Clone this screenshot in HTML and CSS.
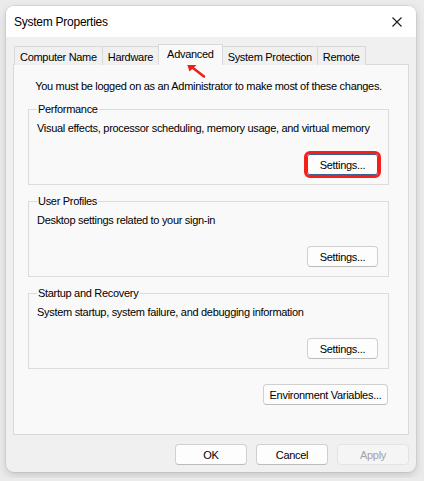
FILE: index.html
```html
<!DOCTYPE html>
<html>
  <head>
    <meta charset="UTF-8">
    <title>System Properties</title>
    <link rel="stylesheet" href="styles.css">
  </head>
  <body>
    <div class="window">
      <div class="titlebar">
        <span class="title">System Properties</span>
        <svg class="close" width="10" height="10" viewBox="0 0 10 10">
          <path d="M0.5 0.5 L9.5 9.5 M9.5 0.5 L0.5 9.5" stroke="#1a1a1a" stroke-width="1.1" fill="none"/>
        </svg>
      </div>
      <div class="content">
        <div class="tabs">
          <div class="tab">Computer Name</div>
          <div class="tab">Hardware</div>
          <div class="tab active">Advanced</div>
          <div class="tab">System Protection</div>
          <div class="tab">Remote</div>
        </div>
        <div class="panel">
          <p class="notice">You must be logged on as an Administrator to make most of these changes.</p>
          <fieldset class="group">
            <legend>Performance</legend>
            <p class="desc">Visual effects, processor scheduling, memory usage, and virtual memory</p>
            <div class="actions">
              <button type="button" class="btn marked">Settings...</button>
            </div>
          </fieldset>
          <fieldset class="group">
            <legend>User Profiles</legend>
            <p class="desc">Desktop settings related to your sign-in</p>
            <div class="actions">
              <button type="button" class="btn">Settings...</button>
            </div>
          </fieldset>
          <fieldset class="group">
            <legend>Startup and Recovery</legend>
            <p class="desc">System startup, system failure, and debugging information</p>
            <div class="actions">
              <button type="button" class="btn">Settings...</button>
            </div>
          </fieldset>
          <div class="env-row">
            <button type="button" class="btn wide">Environment Variables...</button>
          </div>
        </div>
        <div class="footer">
          <button type="button" class="btn dialog">OK</button>
          <button type="button" class="btn dialog">Cancel</button>
          <button type="button" class="btn dialog" disabled>Apply</button>
        </div>
      </div>
      <svg class="arrow" width="20" height="16" viewBox="0 0 20 16">
        <path d="M7 5 L18 13.5" stroke="#e8231c" stroke-width="2.6" stroke-linecap="round"/>
        <path d="M1 1 L10.5 2 L3.5 8.5 Z" fill="#e8231c"/>
      </svg>
    </div>
  </body>
</html>
```

FILE: styles.css
```css
* {
  box-sizing: border-box;
}
body {
  margin: 0;
  padding: 6px;
  background-color: #ebebeb;
  font-family: "Liberation Sans", Arial, sans-serif;
  font-size: 11px;
  letter-spacing: -0.3px;
  color: #000;
}
p {
  margin: 0;
}
.window {
  position: relative;
  width: 410px;
  height: 466px;
  border-radius: 8px;
  background-color: #f0f0f0;
  box-shadow: 0 0 0 1px rgba(0, 0, 0, 0.06), 0 3px 8px rgba(0, 0, 0, 0.16);
  overflow: hidden;
}
.titlebar {
  display: flex;
  align-items: center;
  justify-content: space-between;
  height: 31px;
  padding: 0 14px 0 8px;
  background-color: #fff;
}
.title {
  font-size: 12px;
  letter-spacing: -0.25px;
  padding-top: 1px;
}
.close {
  display: block;
  margin-top: 1px;
}
.content {
  padding: 7px 7px 0 7px;
}
.tabs {
  display: flex;
  align-items: flex-end;
  height: 21px;
  margin-bottom: -1px;
  padding-left: 1px;
}
.tab {
  height: 19px;
  padding: 3px 5px 0 5px;
  border: 1px solid #d9d9d9;
  border-bottom: none;
  margin-right: -1px;
  background-color: #f0f0f0;
  line-height: 15px;
}
.tab.active {
  position: relative;
  z-index: 1;
  height: 21px;
  padding: 2px 8px 0 8px;
  background-color: #f9f9f9;
}
.panel {
  height: 371px;
  padding: 14px 19px 0 14px;
  border: 1px solid #d9d9d9;
  background-color: #f9f9f9;
  line-height: 15px;
}
.notice {
  margin-bottom: 8px;
  text-align: center;
  white-space: nowrap;
}
.group {
  margin: 0 0 9px 0;
  padding: 0 10px 9px 8px;
  border: 1px solid #dcdcdc;
  min-width: 0;
}
.group legend {
  padding: 0 1px;
  line-height: 15px;
}
.desc {
  margin-top: 4px;
  white-space: nowrap;
}
.actions {
  display: flex;
  justify-content: flex-end;
  margin-top: 18px;
}
.btn {
  height: 21px;
  width: 71px;
  padding: 0;
  border: 1px solid #d0d0d0;
  border-bottom-color: #bcbcbc;
  border-radius: 4px;
  background-color: #fdfdfd;
  font-family: "Liberation Sans", Arial, sans-serif;
  font-size: 11px;
  letter-spacing: -0.3px;
  color: #000;
}
.btn.marked {
  border-color: #3d5f94;
  outline: 3px solid #f5201c;
  border-radius: 3px;
}
.btn.wide {
  width: 125px;
}
.env-row {
  display: flex;
  justify-content: flex-end;
  margin: 15px 1px 0 0;
}
.footer {
  display: flex;
  justify-content: flex-end;
  gap: 9px;
  margin-top: 9px;
}
.btn.dialog {
  width: 72px;
}
.btn:disabled {
  color: #a3a3a3;
  border-color: #e3e3e3;
  background-color: #f5f5f5;
}
.arrow {
  position: absolute;
  left: 180px;
  top: 57px;
}
```
